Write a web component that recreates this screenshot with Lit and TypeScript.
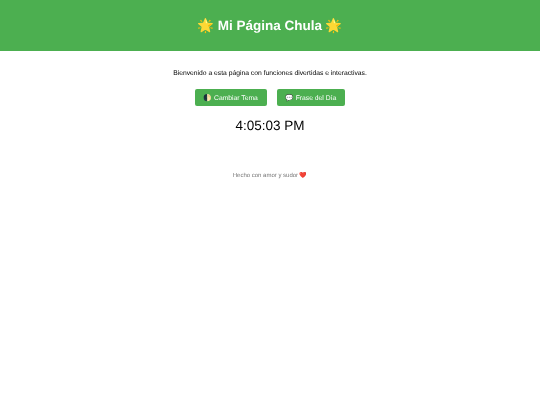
import { LitElement, html, css } from "lit";
import { customElement } from "lit/decorators.js";

@customElement("app-root")
export class AppRoot extends LitElement {
  static styles = css`
    :host { display: block; font-family: "Liberation Sans", Arial, sans-serif; background: #fff; min-height: 405px; text-align: center; color: #000; text-rendering: geometricPrecision; filter: blur(0.3px); }
    header { background: #4caf50; color: #fff; padding: 15px; height: 21px; }
    h1 { margin: 0; font-size: 13.5px; line-height: 21px; font-weight: bold; }
    main { padding: 16px 0 0; }
    .intro { margin: 0; font-size: 6.75px; line-height: 13px; }
    .buttons { display: flex; justify-content: center; gap: 10px; margin-top: 9px; }
    button { background: #4caf50; color: #fff; border: none; border-radius: 2px; height: 17px; padding: 0 8.8px; font: 6.75px "Liberation Sans", Arial, sans-serif; text-rendering: geometricPrecision; }
    .clock { font-size: 13.5px; line-height: 20px; margin-top: 10px; }
    footer { margin-top: 35px; font-size: 6px; line-height: 10px; color: #777; }
  `;
  render() {
    return html`
      <header><h1>🌟 Mi Página Chula 🌟</h1></header>
      <main>
        <p class="intro">Bienvenido a esta página con funciones divertidas e interactivas.</p>
        <div class="buttons">
          <button>🌓 Cambiar Tema</button>
          <button>💬 Frase del Día</button>
        </div>
        <div class="clock">4:05:03 PM</div>
        <footer>Hecho con amor y sudor ❤️</footer>
      </main>
    `;
  }
}
